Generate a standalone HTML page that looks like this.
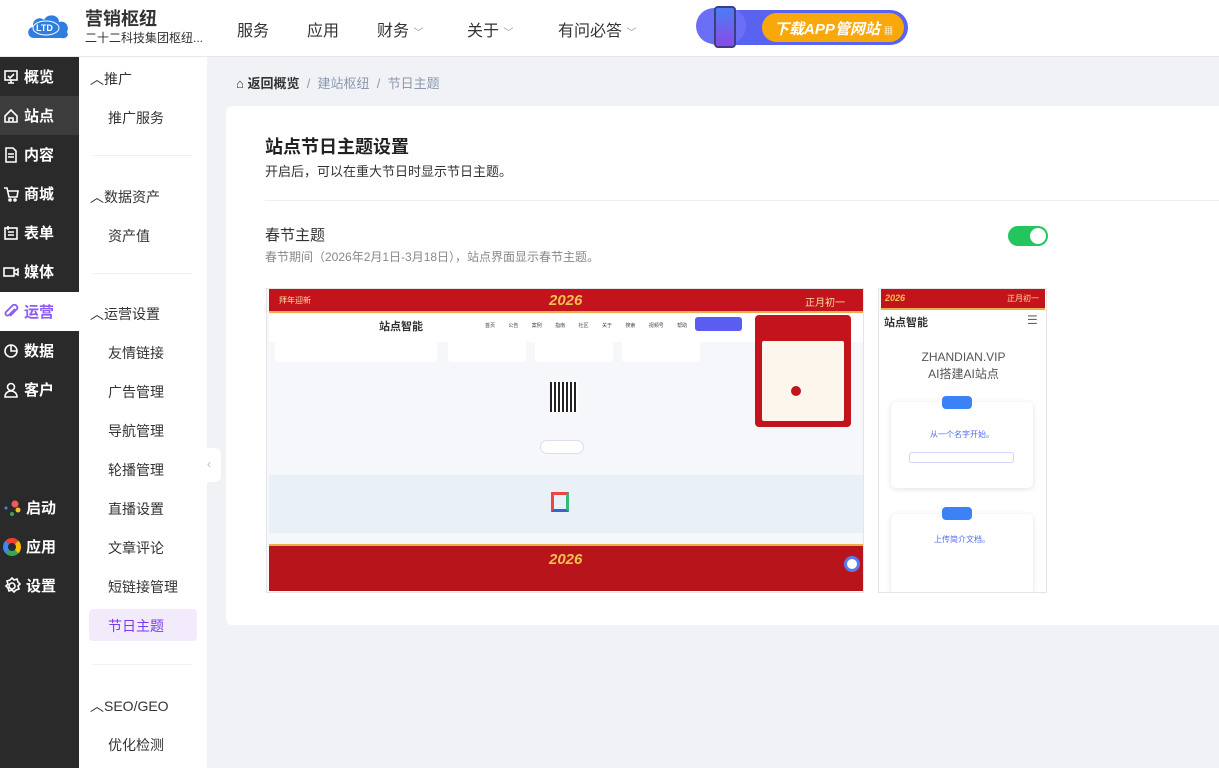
<!DOCTYPE html>
<html><head><meta charset="utf-8"><style>
*{margin:0;padding:0;box-sizing:border-box}
body{width:1219px;height:768px;overflow:hidden;font-family:"Liberation Sans","Noto Sans CJK SC",sans-serif;background:#f0f2f5;position:relative;color:#333}
.abs{position:absolute}
.hdr{left:0;top:0;width:1219px;height:57px;background:#fff;border-bottom:1px solid #e8e8e8}
.nav{top:17px;font-size:16px;color:#333}
.side{left:0;top:57px;width:79px;height:711px;background:#2a2a2a}
.si{left:0;width:79px;height:39px;color:#fff;font-size:15px;font-weight:bold;display:flex;align-items:center;padding-left:3px;gap:5px}
.si svg{flex:none}
.side2{left:79px;top:57px;width:128px;height:711px;background:#fff}
.g{left:90px;font-size:14px;color:#333}
.it{left:108px;font-size:14px;color:#333}
.hr{left:93px;width:99px;height:1px;background:#eef0f5}
</style></head><body>
<div class="abs hdr"></div>
<svg class="abs" style="left:26px;top:12px" width="44" height="28" viewBox="0 0 44 28"><path d="M8 26 C1 26 0 16 7 15 C6 7 14 4 18 8 C21 1 33 2 33 10 C39 8 44 14 41 20 C44 25 38 27 35 26Z" fill="#2f7de1"/><ellipse cx="20" cy="16" rx="13" ry="7" fill="none" stroke="#fff" stroke-width="1"/><text x="10" y="19" font-size="9" fill="#fff" font-weight="bold" font-family="Liberation Sans">LTD</text></svg>
<div class="abs" style="left:85px;top:5px;font-size:18px;font-weight:bold;color:#333">营销枢纽</div>
<div class="abs" style="left:85px;top:29px;font-size:12px;color:#333">二十二科技集团枢纽...</div>
<div class="abs nav" style="left:237px">服务</div>
<div class="abs nav" style="left:307px">应用</div>
<div class="abs nav" style="left:377px">财务 <span style="font-size:10px;color:#999">﹀</span></div>
<div class="abs nav" style="left:467px">关于 <span style="font-size:10px;color:#999">﹀</span></div>
<div class="abs nav" style="left:558px">有问必答 <span style="font-size:10px;color:#999">﹀</span></div>
<div class="abs" style="left:700px;top:10px;width:208px;height:35px;border-radius:18px;background:#5a63f0"></div>
<div class="abs" style="left:696px;top:8px;width:50px;height:36px;border-radius:18px;background:#6b6ff5"></div>
<div class="abs" style="left:762px;top:13px;width:142px;height:29px;border-radius:15px;background:#f9a80b;color:#fff;font-size:15px;font-weight:bold;font-style:italic;padding:5px 0 0 12px">下载APP管网站 <span style="font-size:9px;font-style:normal">▦</span></div>
<div class="abs" style="left:714px;top:6px;width:22px;height:42px;border-radius:4px;background:linear-gradient(#4b7cf5,#8a4be8);border:2px solid #3a3f80"></div>
<div class="abs side"></div>
<div class="abs" style="left:0;top:96px;width:79px;height:39px;background:#3c3c3c"></div>
<div class="abs" style="left:0;top:292px;width:79px;height:39px;background:#fff"></div>
<div class="abs si" style="top:57px"><svg width="16" height="16" viewBox="0 0 16 16" fill="none" stroke="#fff" stroke-width="1.6"><rect x="2" y="2" width="12" height="9"/><path d="M5 14h6M8 11v3M5 7l2 2 4-4"/></svg>概览</div>
<div class="abs si" style="top:96px"><svg width="16" height="16" viewBox="0 0 16 16" fill="none" stroke="#fff" stroke-width="1.6"><path d="M2 8L8 2l6 6v6H2z"/><path d="M6 14v-4h4v4"/></svg>站点</div>
<div class="abs si" style="top:135px"><svg width="16" height="16" viewBox="0 0 16 16" fill="none" stroke="#fff" stroke-width="1.6"><path d="M3 1h7l3 3v11H3z"/><path d="M5 7h6M5 10h6"/></svg>内容</div>
<div class="abs si" style="top:174px"><svg width="16" height="16" viewBox="0 0 16 16" fill="none" stroke="#fff" stroke-width="1.6"><path d="M1 2h3l2 9h8l1-6H5"/><circle cx="7" cy="14" r="1"/><circle cx="12" cy="14" r="1"/></svg>商城</div>
<div class="abs si" style="top:213px"><svg width="16" height="16" viewBox="0 0 16 16" fill="none" stroke="#fff" stroke-width="1.6"><rect x="2" y="3" width="12" height="11"/><path d="M5 1v4M5 7h6M5 10h6"/></svg>表单</div>
<div class="abs si" style="top:252px"><svg width="16" height="16" viewBox="0 0 16 16" fill="none" stroke="#fff" stroke-width="1.6"><rect x="1" y="4" width="10" height="8"/><path d="M11 7l4-2v6l-4-2"/></svg>媒体</div>
<div class="abs si" style="top:292px;color:#8b5cf6"><svg width="16" height="16" viewBox="0 0 16 16" fill="none" stroke="#8b5cf6" stroke-width="1.8"><path d="M12 5L6 11a2 2 0 01-3-3l7-7a3 3 0 014 4l-7 7"/></svg>运营</div>
<div class="abs si" style="top:331px"><svg width="16" height="16" viewBox="0 0 16 16" fill="none" stroke="#fff" stroke-width="1.6"><circle cx="8" cy="8" r="6"/><path d="M8 2v6h6"/></svg>数据</div>
<div class="abs si" style="top:370px"><svg width="16" height="16" viewBox="0 0 16 16" fill="none" stroke="#fff" stroke-width="1.6"><circle cx="8" cy="5" r="3.5"/><path d="M2 15c0-4 3-6 6-6s6 2 6 6z"/></svg>客户</div>
<div class="abs si" style="top:488px"><svg width="18" height="18" viewBox="0 0 18 18"><circle cx="12" cy="5" r="3.5" fill="#f05a5a"/><circle cx="15" cy="11" r="2.5" fill="#f7c02b"/><circle cx="9" cy="15" r="2" fill="#34a853"/><circle cx="3" cy="9" r="1.5" fill="#4285f4"/></svg>启动</div>
<div class="abs si" style="top:527px"><span style="display:inline-block;width:18px;height:18px;border-radius:50%;border:5px solid;border-color:#ea4335 #fbbc05 #34a853 #4285f4"></span>应用</div>
<div class="abs si" style="top:566px"><svg width="18" height="18" viewBox="0 0 18 18" fill="none" stroke="#fff" stroke-width="1.6"><path d="M9 1l2 2 3-1 1 3 2 2-2 2 1 3-3 1-2 2-2-2-3 1-1-3-2-2 2-2-1-3 3-1z"/><circle cx="9" cy="9" r="3"/></svg>设置</div>
<div class="abs side2"></div>
<div class="abs g" style="top:69px">︿推广</div>
<div class="abs it" style="top:108px">推广服务</div>
<div class="abs hr" style="top:155px"></div>
<div class="abs g" style="top:187px">︿数据资产</div>
<div class="abs it" style="top:226px">资产值</div>
<div class="abs hr" style="top:273px"></div>
<div class="abs g" style="top:304px">︿运营设置</div>
<div class="abs it" style="top:343px">友情链接</div>
<div class="abs it" style="top:382px">广告管理</div>
<div class="abs it" style="top:421px">导航管理</div>
<div class="abs it" style="top:460px">轮播管理</div>
<div class="abs it" style="top:499px">直播设置</div>
<div class="abs it" style="top:538px">文章评论</div>
<div class="abs it" style="top:577px">短链接管理</div>
<div class="abs" style="left:89px;top:609px;width:108px;height:32px;background:#f1ebfc;border-radius:4px"></div>
<div class="abs it" style="top:616px;color:#7c3aed">节日主题</div>
<div class="abs hr" style="top:664px"></div>
<div class="abs g" style="top:696px">︿SEO/GEO</div>
<div class="abs it" style="top:735px">优化检测</div>
<div class="abs" style="left:207px;top:448px;width:14px;height:34px;background:#fff;border-radius:0 6px 6px 0;color:#bbb;font-size:12px;padding-top:9px">‹</div>
<div class="abs" style="left:236px;top:73px;font-size:13px;color:#999"><b style="color:#333">⌂ 返回概览</b> &nbsp;/&nbsp; <span style="color:#8a9ab0">建站枢纽</span> &nbsp;/&nbsp; <span style="color:#8a9ab0">节日主题</span></div>
<div class="abs" style="left:226px;top:106px;width:1000px;height:519px;background:#fff;border-radius:6px"></div>
<div class="abs" style="left:265px;top:133px;font-size:18px;font-weight:bold;color:#222">站点节日主题设置</div>
<div class="abs" style="left:265px;top:161px;font-size:13px;color:#333">开启后，可以在重大节日时显示节日主题。</div>
<div class="abs" style="left:265px;top:200px;width:954px;height:1px;background:#eee"></div>
<div class="abs" style="left:265px;top:224px;font-size:15px;color:#333">春节主题</div>
<div class="abs" style="left:265px;top:248px;font-size:12px;color:#888">春节期间（2026年2月1日-3月18日），站点界面显示春节主题。</div>
<div class="abs" style="left:1008px;top:226px;width:40px;height:20px;border-radius:10px;background:#22c55e"></div>
<div class="abs" style="left:1030px;top:228px;width:16px;height:16px;border-radius:50%;background:#fff"></div>
<!-- preview 1 -->
<div class="abs" style="left:266px;top:288px;width:598px;height:305px;background:#f5f7fb;border:1px solid #e5e5e5;overflow:hidden">
 <div class="abs" style="left:2px;top:0;width:594px;height:24px;background:#c3141d;border-bottom:2px solid #e8b04a"></div>
 <div class="abs" style="left:282px;top:3px;color:#f2c14e;font-weight:bold;font-style:italic;font-size:15px">2026</div>
 <div class="abs" style="left:12px;top:6px;color:#f8dfa0;font-size:8px">拜年迎新</div>
 <div class="abs" style="left:538px;top:5px;color:#f8dfa0;font-size:10px">正月初一</div>
 <div class="abs" style="left:2px;top:25px;width:594px;height:28px;background:#fff"></div>
 <div class="abs" style="left:112px;top:29px;font-size:11px;font-weight:bold;color:#333">站点智能</div>
 <div class="abs" style="left:218px;top:33px;font-size:5px;color:#444;word-spacing:12px">首页 公告 案例 指南 社区 关于 搜索 视频号 帮助</div>
 <div class="abs" style="left:428px;top:28px;width:47px;height:14px;border-radius:3px;background:#5b5cf0"></div>
 <div class="abs" style="left:8px;top:48px;width:162px;height:25px;background:#fff;border-radius:3px"></div>
 <div class="abs" style="left:181px;top:48px;width:78px;height:25px;background:#fff;border-radius:3px"></div>
 <div class="abs" style="left:268px;top:48px;width:78px;height:25px;background:#fff;border-radius:3px"></div>
 <div class="abs" style="left:355px;top:48px;width:78px;height:25px;background:#fff;border-radius:3px"></div>
 <div class="abs" style="left:283px;top:93px;width:28px;height:30px;background:repeating-linear-gradient(90deg,#222 0 2px,#fff 2px 4px)"></div>
 <div class="abs" style="left:273px;top:151px;width:44px;height:14px;border-radius:7px;border:1px solid #dde;background:#fff"></div>
 <div class="abs" style="left:488px;top:26px;width:96px;height:112px;background:#c3141d;border-radius:4px"></div>
 <div class="abs" style="left:495px;top:52px;width:82px;height:80px;background:#fdf6ec;border-radius:2px"></div>
 <div class="abs" style="left:524px;top:97px;width:10px;height:10px;border-radius:50%;background:#c3141d"></div>
 <div class="abs" style="left:2px;top:186px;width:594px;height:58px;background:#eaf0f8"></div>
 <div class="abs" style="left:284px;top:203px;width:18px;height:20px;border:3px solid #e44;border-right-color:#3b7;border-bottom-color:#36c"></div>
 <div class="abs" style="left:2px;top:255px;width:594px;height:47px;background:#b8141c;border-top:2px solid #e8b04a"></div>
 <div class="abs" style="left:282px;top:262px;color:#f2c14e;font-weight:bold;font-style:italic;font-size:15px">2026</div>
 <div class="abs" style="left:577px;top:267px;width:16px;height:16px;border-radius:50%;border:3px solid #5a7bf0;background:#fff"></div>
</div>
<!-- preview 2 -->
<div class="abs" style="left:878px;top:288px;width:169px;height:305px;background:#f7f8fb;border:1px solid #e5e5e5;overflow:hidden">
 <div class="abs" style="left:2px;top:0;width:164px;height:21px;background:#c3141d;border-bottom:2px solid #e8b04a"></div>
 <div class="abs" style="left:6px;top:4px;color:#f2c14e;font-weight:bold;font-style:italic;font-size:9px">2026</div>
 <div class="abs" style="left:128px;top:4px;color:#f8dfa0;font-size:8px">正月初一</div>
 <div class="abs" style="left:0;top:22px;width:169px;height:283px;background:#fff"></div>
 <div class="abs" style="left:5px;top:25px;font-size:11px;font-weight:bold;color:#333">站点智能</div>
 <div class="abs" style="left:148px;top:24px;font-size:12px;color:#666">☰</div>
 <div class="abs" style="left:0;top:60px;width:169px;text-align:center;font-size:12px;color:#555;line-height:17px">ZHANDIAN.VIP<br>AI搭建AI站点</div>
 <div class="abs" style="left:12px;top:113px;width:142px;height:86px;background:#fff;border-radius:5px;box-shadow:0 1px 6px rgba(0,0,0,.12)"></div>
 <div class="abs" style="left:63px;top:107px;width:30px;height:13px;border-radius:4px;background:#3b82f6"></div>
 <div class="abs" style="left:20px;top:140px;text-align:center;width:126px;font-size:8px;color:#4f6ef0">从一个名字开始。</div>
 <div class="abs" style="left:30px;top:163px;width:105px;height:11px;border:1px solid #cfd6f5;border-radius:3px"></div>
 <div class="abs" style="left:12px;top:225px;width:142px;height:80px;background:#fff;border-radius:5px;box-shadow:0 1px 6px rgba(0,0,0,.12)"></div>
 <div class="abs" style="left:63px;top:218px;width:30px;height:13px;border-radius:4px;background:#3b82f6"></div>
 <div class="abs" style="left:20px;top:245px;text-align:center;width:126px;font-size:8px;color:#4f6ef0">上传简介文档。</div>
</div>
</body></html>
